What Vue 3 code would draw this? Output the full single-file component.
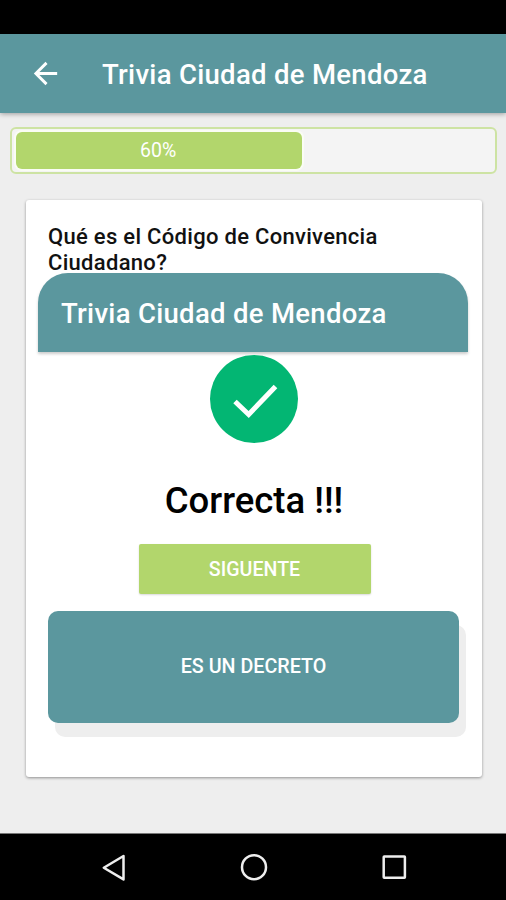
<template>
  <div class="screen">
    <div class="status-bar"></div>
    <header class="toolbar">
      <svg class="back" viewBox="0 0 24 24">
        <path d="M20 11H7.83l5.59-5.59L12 4l-8 8 8 8 1.41-1.41L7.83 13H20z" fill="#fff" />
      </svg>
      <h1 class="title">{{ title }}</h1>
    </header>
    <main class="content">
      <div class="progress">
        <div class="progress-bar" :style="{ width: `${progress}%` }">
          <span>{{ progress }}%</span>
        </div>
      </div>
      <section class="card">
        <p class="question">{{ question }}</p>
        <div class="dialog">
          <div class="dialog-head">
            <h2 class="title">{{ title }}</h2>
          </div>
          <div class="dialog-body">
            <svg class="check" viewBox="0 0 88 88">
              <circle cx="44" cy="44" r="44" fill="#03b673" />
              <path d="M25 46.5L38.7 59.5L65.5 31.5" fill="none" stroke="#fff" stroke-width="5" />
            </svg>
            <p class="result">Correcta !!!</p>
            <button class="next"><span>SIGUENTE</span></button>
          </div>
        </div>
        <button class="answer"><span>{{ answer }}</span></button>
      </section>
    </main>
    <nav class="nav-bar">
      <svg viewBox="0 0 30 30">
        <path d="M24.5 3v23.4L4.8 14.7z" />
      </svg>
      <svg viewBox="0 0 30 30">
        <circle cx="15" cy="14.2" r="12" />
      </svg>
      <svg viewBox="0 0 30 30">
        <rect x="4.7" y="3.5" width="21.2" height="21.2" rx="0.5" />
      </svg>
    </nav>
  </div>
</template>
<script setup>
  import { ref } from 'vue';
  const title = 'Trivia Ciudad de Mendoza';
  const question = 'Qué es el Código de Convivencia Ciudadano?';
  const answer = 'ES UN DECRETO';
  const progress = ref(60);
</script>
<style>
  body {
    margin: 0;
  }
</style>
<style scoped>
  .screen {
    display: flex;
    flex-direction: column;
    width: 506px;
    height: 900px;
    overflow: hidden;
    font-family: Roboto, 'Liberation Sans', sans-serif;
    background: #eee;
  }
  .status-bar {
    flex: none;
    height: 34px;
    background: #000;
  }
  .toolbar {
    display: flex;
    flex: none;
    align-items: center;
    box-sizing: border-box;
    height: 79px;
    padding-left: 28px;
    background: #5b979e;
    box-shadow: 0 1px 5px rgba(0, 0, 0, 0.35);
  }
  .back {
    width: 35px;
    height: 35px;
    margin-right: 39px;
  }
  .title {
    margin: 0;
    font-size: 27.5px;
    font-weight: 500;
    line-height: 32px;
    letter-spacing: 0.3px;
    white-space: nowrap;
    color: #fff;
  }
  .toolbar .title {
    padding-top: 2px;
  }
  .content {
    flex: 1;
    padding: 14px 9px 0 10px;
  }
  .progress {
    box-sizing: border-box;
    height: 47px;
    padding: 3px;
    border: 2px solid #cde3a3;
    border-radius: 6px;
    background: #f4f4f4;
  }
  .progress-bar {
    display: flex;
    align-items: center;
    justify-content: center;
    box-sizing: border-box;
    height: 37px;
    margin-left: 1px;
    font-size: 19.5px;
    color: #fff;
    border-radius: 6px;
    background: #b2d66c;
    box-shadow: 0 0 0 2px #fafdf4;
  }
  .progress-bar span {
    margin: 0 2px 1px 0;
  }
  .card {
    box-sizing: border-box;
    height: 577px;
    margin: 26px 15px 0 16px;
    padding: 24px 23px 0 22px;
    border-radius: 3px;
    background: #fff;
    box-shadow: 0 1px 3px rgba(0, 0, 0, 0.4);
  }
  .question {
    margin: 0;
    font-size: 22px;
    font-weight: 500;
    line-height: 26px;
    letter-spacing: 0.3px;
    color: #111;
  }
  .dialog {
    height: 324px;
    margin: -3px -9px 14px -10px;
    background: #fff;
    border-radius: 30px 30px 0 0;
  }
  .dialog-head {
    display: flex;
    align-items: center;
    box-sizing: border-box;
    height: 79px;
    padding: 2px 0 0 23px;
    border-radius: 30px 30px 0 0;
    background: #5b979e;
    box-shadow: 0 2px 3px rgba(0, 0, 0, 0.2);
  }
  .dialog-body {
    display: flex;
    flex-direction: column;
    align-items: center;
  }
  .check {
    width: 88px;
    height: 88px;
    margin: 3px 0 0 2px;
  }
  .result {
    margin: 36px 0 21px 2px;
    font-size: 36.5px;
    font-weight: 500;
    line-height: 44px;
    color: #000;
  }
  button {
    display: flex;
    align-items: center;
    justify-content: center;
    padding: 0;
    border: 0;
    font-family: inherit;
    font-weight: 500;
    color: #fff;
  }
  .next {
    width: 232px;
    height: 50px;
    margin-left: 3px;
    font-size: 19.6px;
    border-radius: 2px;
    background: #b2d66c;
    box-shadow: 0 1px 2px rgba(0, 0, 0, 0.15);
  }
  .answer {
    width: 411px;
    height: 112px;
    padding-bottom: 1px;
    font-size: 19.7px;
    border-radius: 10px;
    background: #5b979e;
    box-shadow: 7px 14px 0 #eee;
  }
  .nav-bar {
    display: flex;
    flex: none;
    justify-content: space-between;
    box-sizing: border-box;
    height: 67px;
    padding: 19px 97px 0 99px;
    background: #000;
    border-top: 1px solid #777;
  }
  .nav-bar svg {
    width: 30px;
    height: 30px;
    fill: none;
    stroke: #eee;
    stroke-width: 2.5;
    stroke-linejoin: round;
  }
</style>
